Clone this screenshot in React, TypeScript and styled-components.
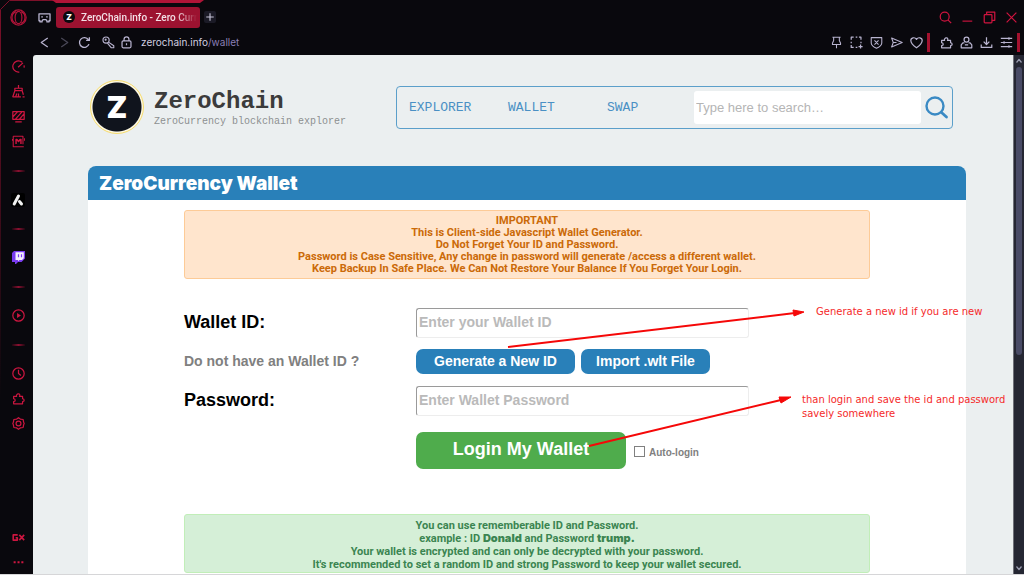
import React from "react";
import styled, { createGlobalStyle } from "styled-components";

const sans = `"Liberation Sans", Arial, sans-serif`;
const mono = `"Liberation Mono", "Courier New", monospace`;
const ui = `Roboto, sans-serif`;
const heavy = `Inter, "Arial Black", sans-serif`;

const GlobalStyle = createGlobalStyle`
  *, *::before, *::after { box-sizing: border-box; }
  body { margin: 0; background: #09080d; font-family: ${sans}; }
  button { font: inherit; cursor: pointer; }
`;

const Window = styled.div`
  position: relative;
  display: flex;
  flex-direction: column;
  height: 100vh;
  overflow: hidden;
  background: #09080d;
  border-bottom: 1px solid #d6d6d8;
`;

const FrameEdge = styled.svg`
  position: absolute;
  left: 0;
  top: 0;
  pointer-events: none;
`;

const TabStrip = styled.div`
  display: flex;
  align-items: center;
  height: 34px;
  padding-right: 2px;
`;

const AddressRow = styled.div`
  display: flex;
  align-items: center;
  height: 20px;
  padding: 0 4px 0 34px;
  margin-top: -2px;
  margin-bottom: 2px;
`;

const Push = styled.div`
  flex: 1;
`;

const IconGroup = styled.div`
  display: flex;
  align-items: center;
  margin-left: 5px;
`;

const IconButton = styled.button<{ $w?: number; $color?: string }>`
  display: flex;
  align-items: center;
  justify-content: center;
  flex: none;
  width: ${(p) => p.$w ?? 20}px;
  height: 20px;
  padding: 0;
  border: 0;
  background: none;
  color: ${(p) => p.$color ?? "#b9b4d0"};
`;

const Tab = styled.div`
  display: flex;
  align-items: center;
  gap: 6px;
  width: 144px;
  height: 21px;
  margin-left: 4px;
  padding: 0 5px 0 7px;
  border-radius: 3px;
  background: #9c1230;
  color: #f3dfe6;
  font: 500 10px/21px ${ui};
`;

const TabIcon = styled.span`
  flex: none;
  width: 12px;
  height: 12px;
  border-radius: 50%;
  background: #0b0a0e;
  color: #fff;
  font: 900 8px/12px ${heavy};
  text-align: center;
`;

const TabTitle = styled.span`
  white-space: nowrap;
  mask-image: linear-gradient(90deg, #000 82%, transparent);
`;

const NewTab = styled.button`
  display: flex;
  align-items: center;
  justify-content: center;
  width: 12px;
  height: 12px;
  margin-left: 4px;
  padding: 0;
  border: 0;
  border-radius: 2px;
  background: #1b1a26;
  color: #c9c5da;
`;

const Address = styled.div`
  margin-left: 6px;
  color: #d2cfe0;
  font: 400 10px/20px ${heavy};
  span { color: #8b7fb5; }
`;

const Marker = styled.span<{ $gap?: number }>`
  width: 3px;
  height: 19px;
  margin: 0 ${(p) => p.$gap ?? 0}px 0 1px;
  background: #a3122f;
`;

const Body = styled.div`
  display: flex;
  flex: 1;
  min-height: 0;
`;

const Sidebar = styled.nav`
  display: flex;
  flex-direction: column;
  align-items: center;
  width: 33px;
  flex: none;
  padding-left: 3px;
`;

const SideButton = styled.button`
  display: flex;
  align-items: center;
  justify-content: center;
  flex: none;
  width: 25px;
  height: 25px;
  padding: 0;
  border: 0;
  background: none;
  color: #cc1640;
`;

const SideRule = styled.div`
  display: flex;
  align-items: center;
  height: 33px;
  flex: none;
  &::before {
    content: "";
    width: 13px;
    height: 2px;
    background: linear-gradient(90deg, #1d0710, #8a1030, #1d0710);
  }
`;

const Page = styled.main`
  position: relative;
  display: flex;
  flex-direction: column;
  flex: 1;
  min-width: 0;
  margin-top: 1px;
  padding: 25px 47px 0 55px;
  overflow: hidden;
  border-top-left-radius: 3px;
  background: #ebeff0;
`;

const SiteHeader = styled.header`
  display: flex;
  align-items: center;
  flex: none;
  height: 54px;
  padding: 0 13px 0 2px;
  margin-bottom: 32px;
`;

const Logo = styled.div`
  display: flex;
  align-items: center;
  justify-content: center;
  flex: none;
  width: 54px;
  height: 54px;
  border: 1px solid #f7dc6c;
  border-radius: 50%;
  background: radial-gradient(circle, #10141d 24px, #fdf8e4 25px);
  color: #fff;
  font: 900 30px/52px ${heavy};
`;

const Brand = styled.div`
  margin-left: 10px;
  padding-top: 2px;
  font-family: ${mono};
  h1 {
    margin: 0;
    color: #3b3b3b;
    font-size: 24px;
    line-height: 27px;
  }
  p {
    margin: 0;
    color: #8d8f90;
    font-size: 10px;
    line-height: 14px;
  }
`;

const SiteNav = styled.nav`
  display: flex;
  align-items: center;
  flex: 0 1 557px;
  height: 43px;
  margin-left: auto;
  padding: 0 3px 0 12px;
  border: 1px solid #5b9fca;
  border-radius: 4px;
`;

const NavLink = styled.a`
  width: 99px;
  padding-top: 2px;
  color: #4a90c4;
  font: 13px/20px ${mono};
  text-decoration: none;
`;

const SearchBox = styled.input`
  flex: 1;
  min-width: 0;
  height: 33px;
  margin: 0 4px 0 -12px;
  padding: 0 2px;
  border: 0;
  border-radius: 3px;
  background: #fff;
  font: 13px ${sans};
  &::placeholder { color: #b5b5b5; opacity: 1; }
`;

const SearchButton = styled.button`
  display: flex;
  padding: 0;
  border: 0;
  background: none;
  color: #3a8ac4;
`;

const Panel = styled.section`
  display: flex;
  flex-direction: column;
  flex: 1 0 auto;
  background: #fff;
  border-radius: 8px 8px 0 0;
`;

const PanelTitle = styled.h2`
  margin: 0;
  height: 34px;
  padding: 0 11px;
  border-radius: 8px 8px 0 0;
  background: #2980b9;
  color: #fff;
  font: 900 19px/36px ${heavy};
`;

const PanelBody = styled.div`
  padding: 10px 96px 1px;
`;

const Notice = styled.div<{ $tone: "warn" | "ok" }>`
  padding: ${(p) => (p.$tone === "warn" ? "4px 8px 3px" : "4px 8px 1px")};
  border: 1px solid ${(p) => (p.$tone === "warn" ? "#fdcb97" : "#c1eeb8")};
  border-radius: 3px;
  background: ${(p) => (p.$tone === "warn" ? "#ffe5cd" : "#d5efd7")};
  color: ${(p) => (p.$tone === "warn" ? "#cb6a08" : "#3b8551")};
  font: 700 11px/${(p) => (p.$tone === "warn" ? 12 : 13)}px Roboto, ${sans};
  text-align: center;
  strong { font-family: ${heavy}; font-weight: 900; }
`;

const Form = styled.form`
  display: grid;
  grid-template-columns: 232px 1fr;
  grid-template-rows: 30px 26px 30px 47px;
  row-gap: 11px;
  margin: 29px 0 40px;
`;

const Label = styled.label`
  color: #000;
  font: 700 18px/29px ${sans};
`;

const Hint = styled.span`
  color: #808080;
  font: 700 14px/25px ${sans};
`;

const Field = styled.input`
  width: 333px;
  max-width: 100%;
  height: 30px;
  padding: 0 2px 2px;
  border: 1px solid;
  border-color: #9a9a9a #ededed #ededed #9a9a9a;
  border-radius: 3px;
  background: #fff;
  font: 700 14px ${sans};
  &::placeholder { color: #bababa; opacity: 1; }
`;

const Actions = styled.div<{ $gap: number; $top?: number }>`
  display: flex;
  align-items: flex-start;
  gap: ${(p) => p.$gap}px;
  padding-top: ${(p) => p.$top ?? 0}px;
`;

const Button = styled.button<{ $w: number; $big?: boolean }>`
  width: ${(p) => p.$w}px;
  height: ${(p) => (p.$big ? 37 : 25)}px;
  padding: 0 0 ${(p) => (p.$big ? 2 : 0)}px;
  border: 0;
  border-radius: 7px;
  background: ${(p) => (p.$big ? "#4fac4c" : "#2980b9")};
  color: #fff;
  font: 700 ${(p) => (p.$big ? "18px/35px" : "14px/25px")} ${sans};
  white-space: nowrap;
`;

const Check = styled.label`
  display: flex;
  align-items: center;
  gap: 4px;
  height: 38px;
  color: #808080;
  font: 700 10px/12px ${sans};
  input {
    appearance: none;
    width: 11px;
    height: 11px;
    margin: 0;
    border: 1px solid #808080;
    background: #fff;
  }
  span { padding-top: 3px; }
`;

const Arrows = styled.svg`
  position: absolute;
  left: 0;
  top: 0;
  pointer-events: none;
`;

const Note = styled.div<{ $x: number; $y: number }>`
  position: absolute;
  left: ${(p) => p.$x}px;
  top: ${(p) => p.$y}px;
  color: #f52a2a;
  font: 10px/14px "DejaVu Sans", Verdana, sans-serif;
  white-space: nowrap;
`;

const Scrollbar = styled.div`
  display: flex;
  flex-direction: column;
  align-items: center;
  flex: none;
  width: 11px;
  margin-top: 1px;
  padding: 2px 0;
  border-left: 1px solid #6e7078;
  background: #252733;
  color: #9a9cb0;
`;

const Track = styled.div`
  flex: 1;
  padding-top: 2px;
  &::before {
    content: "";
    display: block;
    width: 6px;
    height: 58%;
    border-radius: 3px;
    background: #494b66;
  }
`;

type IconProps = { size?: number; w?: number; children: React.ReactNode };
const Icon = ({ size = 13, w = 1.3, children }: IconProps) => (
  <svg width={size} height={size} viewBox="0 0 16 16" fill="none" stroke="currentColor" strokeWidth={w} strokeLinejoin="round" aria-hidden="true">
    {children}
  </svg>
);

const puzzle = (
  <path d="M2 5.500h3.600C4.600 2 9.800 1 9.600 4.200c0 .6-.2 1-.4 1.300H13v2.800c2.600.1 2.600 3.400 0 3.400v2.800H2v-2.800c2.600-.2 2.600-3.200 0-3.400z" />
);

export default function App() {
  return (
    <Window>
      <GlobalStyle />
      <TabStrip>
        <IconButton $w={36} $color="#b3143a" aria-label="Menu">
          <Icon size={17} w={1.1}>
            <circle cx="8" cy="8" r="7.2" />
            <ellipse cx="8" cy="8" rx="3.2" ry="5.8" />
            <path d="M5.500 2.500a6 6 0 0 0 0 11M10.500 2.500a6 6 0 0 1 0 11" />
          </Icon>
        </IconButton>
        <IconButton $w={16} aria-label="Workspace">
          <Icon w={1.6}>
            <path d="M1.200 3.500h13.600v8.500h-1.300v1.500h-2.500V12L9.500 10.500h-3L5 12v1.500H2.500V12H1.200z" />
            <path d="M4 7.200h2M10 7.200h2" />
          </Icon>
        </IconButton>
        <Tab>
          <TabIcon>Z</TabIcon>
          <TabTitle>ZeroChain.info - Zero Curr</TabTitle>
        </Tab>
        <NewTab aria-label="New tab">
          <Icon size={10} w={1.8}><path d="M8 2v12M2 8h12" /></Icon>
        </NewTab>
        <Push />
        <IconButton $w={22} $color="#d0143f" aria-label="Search tabs">
          <Icon w={1.5}><circle cx="7" cy="7" r="5.500" /><path d="m11 11 4 4" /></Icon>
        </IconButton>
        <IconButton $w={22} $color="#d0143f" aria-label="Minimise">
          <Icon size={12} w={1.5}><path d="M2 13.500h13" /></Icon>
        </IconButton>
        <IconButton $w={22} $color="#d0143f" aria-label="Restore">
          <Icon w={1.5}><rect x="1.500" y="4.500" width="9.500" height="10" rx="1" /><path d="M4.500 4.500v-3H14.500v10H11" /></Icon>
        </IconButton>
        <IconButton $w={22} $color="#d0143f" aria-label="Close">
          <Icon w={1.5}><path d="m2 2 12 12M14 2 2 14" /></Icon>
        </IconButton>
      </TabStrip>

      <AddressRow>
        <IconButton aria-label="Back"><Icon w={1.6}><path d="M12 2.500 4 8l8 5.500" /></Icon></IconButton>
        <IconButton $color="#4a4858" aria-label="Forward"><Icon w={1.6}><path d="m4 2.500 8 5.500-8 5.500" /></Icon></IconButton>
        <IconButton aria-label="Reload">
          <Icon w={1.6}><path d="M13.500 10A6 6 0 1 1 12.800 4.500M14 1.500v4h-4" /></Icon>
        </IconButton>
        <IconGroup>
          <IconButton $w={19} aria-label="Site key">
            <Icon w={1.4}><circle cx="5" cy="5" r="3.800" /><circle cx="4.500" cy="4.500" r=".6" /><path d="m8 7.500 6.500 4.500v2.500h-3l-4.800-5.800" /></Icon>
          </IconButton>
          <IconButton $w={17} aria-label="Connection">
            <Icon w={1.5}><rect x="2.500" y="6" width="11" height="8.500" rx="1.500" /><path d="M5 6V4a3 3 0 0 1 6 0v2M8 9v2.500" /></Icon>
          </IconButton>
        </IconGroup>
        <Address>zerochain.info<span>/wallet</span></Address>
        <Push />
        <IconButton aria-label="Pin"><Icon><path d="M3 1.500h10M4.500 1.500v4L3 9v1.500h10V9l-1.500-3.500v-4M8 10.500V15" /></Icon></IconButton>
        <IconButton aria-label="Snapshot">
          <Icon w={1.5}><path d="M1.500 4.500v-3h3M7 1.500h2M11 1.500h2.500v3M1.500 7v2M1.500 11v3h3M7 14h2M13.500 7v2M13 10.500v5M10.500 13h5" /></Icon>
        </IconButton>
        <IconButton aria-label="Ad blocker">
          <Icon><path d="M1.500 2h13v6.500c0 3-3 5-6.500 6.500-3.500-1.500-6.500-3.500-6.500-6.500zM5.500 5.500l5 5M10.500 5.500l-5 5" /></Icon>
        </IconButton>
        <IconButton aria-label="My Flow"><Icon><path d="M2 2.500 15 8 2 13.500 4 8zM4 8h4" /></Icon></IconButton>
        <IconButton aria-label="Favourite">
          <Icon w={1.5}><path d="M8 14.500C3 11 1 8.500 1 5.500 1 2 6 .8 8 4.200 10 .8 15 2 15 5.500c0 3-2 5.500-7 9z" /></Icon>
        </IconButton>
        <Marker $gap={6} />
        <IconButton aria-label="Extensions"><Icon w={1.5}>{puzzle}</Icon></IconButton>
        <IconButton aria-label="Profile">
          <Icon w={1.5}><circle cx="8" cy="4.500" r="3" /><path d="M5.500 8.500h-2L1.500 11v3.500h13V11l-2-2.500h-2M6 11h4" /></Icon>
        </IconButton>
        <IconButton aria-label="Downloads"><Icon w={1.5}><path d="M8 1.500v9M4.500 7 8 10.500 11.500 7M1.500 10.500v3.500h13v-3.500" /></Icon></IconButton>
        <IconButton aria-label="Easy setup">
          <Icon w={1.5}><path d="M1 3h14M1 8h14M1 13h14M11 1.500v3M5 6.500v3M11 11.500v3" /></Icon>
        </IconButton>
        <Marker />
      </AddressRow>

      <Body>
        <Sidebar aria-label="Browser sidebar">
          <SideButton aria-label="GX Control">
            <Icon w={1.5}><path d="M9 14.800A6.900 6.900 0 1 1 12.500 2.800M14.800 6.500a7 7 0 0 1 0 3M7.500 9l6-5.500" /></Icon>
          </SideButton>
          <SideButton aria-label="GX Cleaner">
            <Icon w={1.5}><path d="M8 0v4M3.500 4h9v3h-9zM3.500 7 1 14.500h10M12.500 7l1.500 5M4.500 14.500 6 10.500M8 14.500v-4M13 14.500h2.500" /></Icon>
          </SideButton>
          <SideButton aria-label="Mods">
            <Icon w={1.5}><path d="M1 2h14v9.500H1zM1.500 8l5.500-6M4 11.500 12 2.500M9 11.500l6-7M4 14.500h8" /></Icon>
          </SideButton>
          <SideButton aria-label="Player">
            <Icon w={1.3}>
              <path d="M1.500 1.500h12v10M14.500 14.500h-13v-13M15.500 4v3M.500 5v2" />
              <path d="M5 11V5.500h1L8 8l2-2.500h1V11" strokeWidth="1.800" />
            </Icon>
          </SideButton>
          <SideRule />
          <SideButton aria-label="Aria">
            <svg width="14" height="14" viewBox="0 0 14 14" aria-hidden="true">
              <rect width="14" height="14" rx="2" fill="#000" />
              <path d="M7.500 3 3.200 11" stroke="#f1f1f1" strokeWidth="3" strokeLinecap="round" />
              <path d="m8.500 8.500 2 2.500" stroke="#f1f1f1" strokeWidth="3" strokeLinecap="round" />
            </svg>
          </SideButton>
          <SideRule />
          <SideButton aria-label="Twitch">
            <svg width="13" height="13" viewBox="0 0 13 13" aria-hidden="true">
              <path d="M2 0h11v7.500L9.500 11H6l-2 2H3v-2H0V2z" fill="#7a3cf0" />
              <path d="M3.500 1.200h8.300v6L10 9H7.500L6 10.300V9H3.500z" fill="#f4effd" />
              <path d="M6.500 3.200v3M9.500 3.200v3" stroke="#7a3cf0" strokeWidth="1.200" />
            </svg>
          </SideButton>
          <SideRule />
          <SideButton aria-label="Media player">
            <Icon w={1.5}><circle cx="8" cy="8" r="7" /><path d="M6.200 5v6L11 8z" fill="currentColor" strokeWidth="0" /></Icon>
          </SideButton>
          <SideRule />
          <SideButton aria-label="History">
            <Icon w={1.5}><circle cx="8" cy="8" r="7" /><path d="M8 3.500V8l3 2.500" /></Icon>
          </SideButton>
          <SideButton aria-label="Extensions"><Icon w={1.5}>{puzzle}</Icon></SideButton>
          <SideButton aria-label="Settings">
            <Icon w={1.5}>
              <path d="m8 .8 2.200 1.700 3.500.6.600 3.200L15 8l-.7 1.700-.6 3.200-3.500.6L8 15.200l-2.200-1.700-3.500-.6-.6-3.200L1 8l.7-1.700.6-3.200 3.500-.6z" />
              <circle cx="8" cy="8" r="3" />
            </Icon>
          </SideButton>
          <Push />
          <SideButton aria-label="GX Corner">
            <Icon><path d="M7 6H1.500v6.500h5V9.500H4.500M9 6l6 6.500M15 6l-6 6.500" strokeWidth="2" /></Icon>
          </SideButton>
          <SideButton aria-label="More">
            <Icon><path d="M2 9h2.500M6.800 9h2.500M11.500 9H14" strokeWidth="2.500" /></Icon>
          </SideButton>
        </Sidebar>

        <Page>
          <SiteHeader>
            <Logo>Z</Logo>
            <Brand>
              <h1>ZeroChain</h1>
              <p>ZeroCurrency blockchain explorer</p>
            </Brand>
            <SiteNav>
              <NavLink href="#explorer">EXPLORER</NavLink>
              <NavLink href="#wallet">WALLET</NavLink>
              <NavLink href="#swap">SWAP</NavLink>
              <SearchBox type="text" aria-label="Search" placeholder="Type here to search…" />
              <SearchButton aria-label="Search">
                <svg width="24" height="24" viewBox="0 0 24 24" fill="none" stroke="currentColor" aria-hidden="true">
                  <circle cx="10" cy="11" r="8.500" strokeWidth="2.400" />
                  <path d="m16.500 17.500 5 4.500" strokeWidth="2.800" strokeLinecap="round" />
                </svg>
              </SearchButton>
            </SiteNav>
          </SiteHeader>

          <Panel>
            <PanelTitle>ZeroCurrency Wallet</PanelTitle>
            <PanelBody>
              <Notice $tone="warn">
                IMPORTANT<br />
                This is Client-side Javascript Wallet Generator.<br />
                Do Not Forget Your ID and Password.<br />
                Password is Case Sensitive, Any change in password will generate /access a different wallet.<br />
                Keep Backup In Safe Place. We Can Not Restore Your Balance If You Forget Your Login.
              </Notice>
              <Form onSubmit={(e) => e.preventDefault()}>
                <Label htmlFor="wallet-id">Wallet ID:</Label>
                <Field id="wallet-id" type="text" placeholder="Enter your Wallet ID" />
                <Hint>Do not have an Wallet ID ?</Hint>
                <Actions $gap={6}>
                  <Button type="button" $w={159}>Generate a New ID</Button>
                  <Button type="button" $w={129}>Import .wlt File</Button>
                </Actions>
                <Label htmlFor="wallet-password">Password:</Label>
                <Field id="wallet-password" type="password" placeholder="Enter Wallet Password" />
                <span />
                <Actions $gap={8} $top={5}>
                  <Button type="submit" $w={210} $big>Login My Wallet</Button>
                  <Check htmlFor="auto-login">
                    <input id="auto-login" type="checkbox" />
                    <span>Auto-login</span>
                  </Check>
                </Actions>
              </Form>
              <Notice $tone="ok">
                You can use rememberable ID and Password.<br />
                example : ID <strong>Donald</strong> and Password <strong>trump.</strong><br />
                Your wallet is encrypted and can only be decrypted with your password.<br />
                It's recommended to set a random ID and strong Password to keep your wallet secured.
              </Notice>
            </PanelBody>
          </Panel>

          <Arrows width="800" height="420" viewBox="0 0 800 420" fill="#f50808" stroke="#f50808" aria-hidden="true">
            <path d="M475 292 762 258M556 391 748 345" strokeWidth="2" />
            <path d="m771 257-11-2 1 6zM758 342l-12 0 2 6z" strokeWidth="1" />
          </Arrows>
          <Note $x={783} $y={250}>Generate a new id if you are new</Note>
          <Note $x={769} $y={338}>than login and save the id and password<br />savely somewhere</Note>
        </Page>

        <Scrollbar aria-hidden="true">
          <Icon size={8} w={2.5}><path d="m3 11 5-6 5 6" /></Icon>
          <Track />
          <Icon size={8} w={2.5}><path d="m3 5 5 6 5-6" /></Icon>
        </Scrollbar>
      </Body>

      <FrameEdge width="210" height="400" viewBox="0 0 210 400" fill="none" aria-hidden="true">
        <defs>
          <linearGradient id="edge" x1="0" y1="0" x2="0" y2="1">
            <stop offset="0" stopColor="#7d1029" />
            <stop offset="1" stopColor="#7d1029" stopOpacity="0" />
          </linearGradient>
        </defs>
        <path d="M.500 400V9.500L9.500.500H54" stroke="url(#edge)" />
        <path d="M52 0H204L200 3H56z" fill="#b01437" />
      </FrameEdge>
    </Window>
  );
}
